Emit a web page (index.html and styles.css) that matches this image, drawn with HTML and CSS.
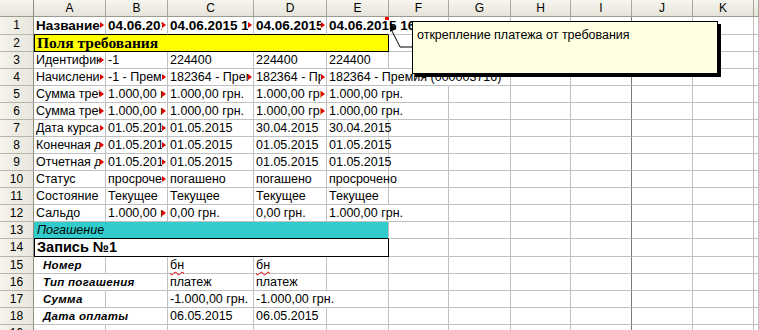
FILE: index.html
```html
<!DOCTYPE html>
<html lang="ru">
<head>
<meta charset="utf-8">
<title>Calc</title>
<link rel="stylesheet" href="styles.css">
</head>
<body>
<div class="sheet">
  <div class="row hdr-row">
    <div class="hd corner"></div>
    <div class="hd">A</div><div class="hd">B</div><div class="hd">C</div><div class="hd">D</div><div class="hd">E</div><div class="hd">F</div><div class="hd">G</div><div class="hd">H</div><div class="hd">I</div><div class="hd">J</div><div class="hd">K</div><div class="hd"></div>
  </div>

  <div class="row tall r1">
    <div class="rh">1</div>
    <div class="c cut bb">Название поля</div>
    <div class="c cut bb">04.06.2015 16:00</div>
    <div class="c cut bb">04.06.2015 16:00</div>
    <div class="c cut bb">04.06.2015 16:00</div>
    <div class="c nob bb note">04.06.2015 16:00</div>
    <div class="c"></div><div class="c"></div><div class="c"></div><div class="c pb"></div><div class="c"></div><div class="c"></div><div class="c"></div>
  </div>

  <div class="row">
    <div class="rh">2</div>
    <div class="c span5 yel">Поля требования</div>
    <div class="c"></div><div class="c"></div><div class="c"></div><div class="c pb"></div><div class="c"></div><div class="c"></div><div class="c"></div>
  </div>

  <div class="row">
    <div class="rh">3</div>
    <div class="c cut">Идентификатор</div>
    <div class="c">-1</div>
    <div class="c">224400</div>
    <div class="c">224400</div>
    <div class="c">224400</div>
    <div class="c"></div><div class="c"></div><div class="c"></div><div class="c pb"></div><div class="c"></div><div class="c"></div><div class="c"></div>
  </div>

  <div class="row">
    <div class="rh">4</div>
    <div class="c cut">Начисление</div>
    <div class="c cut">-1 - Премия</div>
    <div class="c cut">182364 - Премия (000003716)</div>
    <div class="c cut">182364 - Премия (000003716)</div>
    <div class="c nob">182364 - Премия (000003716)</div>
    <div class="c nob"></div><div class="c"></div><div class="c"></div><div class="c pb"></div><div class="c"></div><div class="c"></div><div class="c"></div>
  </div>

  <div class="row">
    <div class="rh">5</div>
    <div class="c cut">Сумма требования</div>
    <div class="c cut">1.000,00 грн.</div>
    <div class="c">1.000,00 грн.</div>
    <div class="c cut">1.000,00 грн.</div>
    <div class="c nob">1.000,00 грн.</div>
    <div class="c"></div><div class="c"></div><div class="c"></div><div class="c pb"></div><div class="c"></div><div class="c"></div><div class="c"></div>
  </div>

  <div class="row">
    <div class="rh">6</div>
    <div class="c cut">Сумма требования</div>
    <div class="c cut">1.000,00 грн.</div>
    <div class="c">1.000,00 грн.</div>
    <div class="c cut">1.000,00 грн.</div>
    <div class="c nob">1.000,00 грн.</div>
    <div class="c"></div><div class="c"></div><div class="c"></div><div class="c pb"></div><div class="c"></div><div class="c"></div><div class="c"></div>
  </div>

  <div class="row">
    <div class="rh">7</div>
    <div class="c cut">Дата курса валюты</div>
    <div class="c cut">01.05.2015</div>
    <div class="c">01.05.2015</div>
    <div class="c">30.04.2015</div>
    <div class="c">30.04.2015</div>
    <div class="c"></div><div class="c"></div><div class="c"></div><div class="c pb"></div><div class="c"></div><div class="c"></div><div class="c"></div>
  </div>

  <div class="row">
    <div class="rh">8</div>
    <div class="c cut">Конечная дата</div>
    <div class="c cut">01.05.2015</div>
    <div class="c">01.05.2015</div>
    <div class="c">01.05.2015</div>
    <div class="c">01.05.2015</div>
    <div class="c"></div><div class="c"></div><div class="c"></div><div class="c pb"></div><div class="c"></div><div class="c"></div><div class="c"></div>
  </div>

  <div class="row">
    <div class="rh">9</div>
    <div class="c cut">Отчетная дата</div>
    <div class="c cut">01.05.2015</div>
    <div class="c">01.05.2015</div>
    <div class="c">01.05.2015</div>
    <div class="c">01.05.2015</div>
    <div class="c"></div><div class="c"></div><div class="c"></div><div class="c pb"></div><div class="c"></div><div class="c"></div><div class="c"></div>
  </div>

  <div class="row">
    <div class="rh">10</div>
    <div class="c">Статус</div>
    <div class="c cut">просрочено</div>
    <div class="c">погашено</div>
    <div class="c">погашено</div>
    <div class="c">просрочено</div>
    <div class="c"></div><div class="c"></div><div class="c"></div><div class="c pb"></div><div class="c"></div><div class="c"></div><div class="c"></div>
  </div>

  <div class="row">
    <div class="rh">11</div>
    <div class="c">Состояние</div>
    <div class="c">Текущее</div>
    <div class="c">Текущее</div>
    <div class="c">Текущее</div>
    <div class="c">Текущее</div>
    <div class="c"></div><div class="c"></div><div class="c"></div><div class="c pb"></div><div class="c"></div><div class="c"></div><div class="c"></div>
  </div>

  <div class="row">
    <div class="rh">12</div>
    <div class="c">Сальдо</div>
    <div class="c cut">1.000,00 грн.</div>
    <div class="c">0,00 грн.</div>
    <div class="c">0,00 грн.</div>
    <div class="c nob">1.000,00 грн.</div>
    <div class="c"></div><div class="c"></div><div class="c"></div><div class="c pb"></div><div class="c"></div><div class="c"></div><div class="c"></div>
  </div>

  <div class="row">
    <div class="rh">13</div>
    <div class="c span5 teal">Погашение</div>
    <div class="c"></div><div class="c"></div><div class="c"></div><div class="c pb"></div><div class="c"></div><div class="c"></div><div class="c"></div>
  </div>

  <div class="row tall">
    <div class="rh">14</div>
    <div class="c span5 rec">Запись №1</div>
    <div class="c"></div><div class="c"></div><div class="c"></div><div class="c pb"></div><div class="c"></div><div class="c"></div><div class="c"></div>
  </div>

  <div class="row">
    <div class="rh">15</div>
    <div class="c lbl">Номер</div>
    <div class="c"></div>
    <div class="c"><span class="spell">бн</span></div>
    <div class="c"><span class="spell">бн</span></div>
    <div class="c"></div>
    <div class="c"></div><div class="c"></div><div class="c"></div><div class="c pb"></div><div class="c"></div><div class="c"></div><div class="c"></div>
  </div>

  <div class="row">
    <div class="rh">16</div>
    <div class="c lbl nob">Тип погашения</div>
    <div class="c"></div>
    <div class="c">платеж</div>
    <div class="c">платеж</div>
    <div class="c"></div>
    <div class="c"></div><div class="c"></div><div class="c"></div><div class="c pb"></div><div class="c"></div><div class="c"></div><div class="c"></div>
  </div>

  <div class="row">
    <div class="rh">17</div>
    <div class="c lbl">Сумма</div>
    <div class="c"></div>
    <div class="c">-1.000,00 грн.</div>
    <div class="c nob">-1.000,00 грн.</div>
    <div class="c"></div>
    <div class="c"></div><div class="c"></div><div class="c"></div><div class="c pb"></div><div class="c"></div><div class="c"></div><div class="c"></div>
  </div>

  <div class="row">
    <div class="rh">18</div>
    <div class="c lbl nob">Дата оплаты</div>
    <div class="c"></div>
    <div class="c">06.05.2015</div>
    <div class="c">06.05.2015</div>
    <div class="c"></div>
    <div class="c"></div><div class="c"></div><div class="c"></div><div class="c pb"></div><div class="c"></div><div class="c"></div><div class="c"></div>
  </div>

  <div class="row">
    <div class="rh">19</div>
    <div class="c"></div><div class="c"></div><div class="c"></div><div class="c"></div><div class="c"></div>
    <div class="c"></div><div class="c"></div><div class="c"></div><div class="c pb"></div><div class="c"></div><div class="c"></div><div class="c"></div>
  </div>

  <svg class="connector" width="40" height="45" viewBox="0 0 40 45">
    <polyline points="12,16 20,32 32,32" fill="none" stroke="#000" stroke-width="1"/>
    <polygon points="10,7 16.6,14.1 10.1,16.7" fill="#000"/>
  </svg>
  <div class="comment">открепление платежа от требования</div>
</div>
</body>
</html>
```

FILE: styles.css
```css
* {
  box-sizing: border-box;
}

body {
  margin: 0;
  background: #ffffff;
  font-family: "Liberation Sans", Arial, sans-serif;
  font-size: 12.5px;
  color: #000;
  overflow: hidden;
}

.sheet {
  position: relative;
  width: 759px;
  height: 330px;
  overflow: hidden;
}

.row {
  display: grid;
  grid-template-columns: 34px 72px 62px 86px 73px 62px 60px 62px 60px 61px 61px 61px 5px;
  height: 17px;
}

.row.tall {
  height: 18px;
}

.hd {
  background: linear-gradient(#f6f5ef, #e6e4d9);
  border-right: 1px solid #a8a79c;
  border-bottom: 1px solid #9c9b90;
  text-align: center;
  font-size: 12px;
  line-height: 16px;
  color: #000;
}

.hd.corner {
  border-right-color: #8e8d83;
}

.rh {
  background: linear-gradient(90deg, #f4f3ec, #e8e6dc);
  border-right: 1px solid #8e8d83;
  border-bottom: 1px solid #b6b5aa;
  text-align: center;
  font-size: 12px;
  line-height: 16px;
}

.row.tall .rh {
  line-height: 17px;
}

.c {
  position: relative;
  min-width: 0;
  border-right: 1px solid #c0c0c0;
  border-bottom: 1px solid #c0c0c0;
  padding-left: 2px;
  white-space: nowrap;
  line-height: 16px;
}

.row.tall .c {
  line-height: 17px;
}

.cut {
  overflow: hidden;
}

.cut::before {
  content: "";
  position: absolute;
  right: 0;
  top: 0;
  bottom: 0;
  width: 5px;
  background: #ffffff;
}

.cut::after {
  content: "";
  position: absolute;
  right: 1px;
  top: 5px;
  width: 0;
  height: 0;
  border-left: 4px solid #e00000;
  border-top: 3px solid transparent;
  border-bottom: 3px solid transparent;
}

.nob {
  border-right-color: transparent;
}

.pb {
  border-right-color: #7a7a7a;
}

.bb {
  border-bottom-color: #000;
}

.r1 .c {
  font-weight: bold;
  font-size: 13.5px;
}

.note::before {
  content: "";
  position: absolute;
  top: 0;
  right: -1px;
  width: 4px;
  height: 3px;
  background: #ff0000;
}

.span5 {
  grid-column: span 5;
}

.yel {
  background: #ffff00;
  border-left: 1px solid #000;
  border-right: 1px solid #000;
  border-bottom: 1px solid #000;
  font-family: "Liberation Serif", "Times New Roman", serif;
  font-weight: bold;
  font-size: 15.5px;
  padding-left: 2px;
}

.teal {
  background: #33cccc;
  border-bottom-color: #000;
  font-style: italic;
  padding-left: 3px;
}

.rec {
  border-left: 1px solid #000;
  border-right: 1px solid #000;
  border-bottom: 1px solid #000;
  font-weight: bold;
  font-size: 14.5px;
  padding-left: 2px;
}

.lbl {
  font-weight: bold;
  font-style: italic;
  font-size: 11.5px;
  padding-left: 9px;
  letter-spacing: 0.3px;
}

.spell {
  text-decoration: underline wavy #e00000;
  text-decoration-thickness: 1px;
  text-underline-offset: 2px;
}

.connector {
  position: absolute;
  left: 380px;
  top: 15px;
}

.comment {
  position: absolute;
  left: 412px;
  top: 21px;
  width: 306px;
  height: 53px;
  background: #ffffe1;
  border: 1px solid #000;
  box-shadow: 3px 3px 0 #000;
  padding: 6px 0 0 4px;
  font-size: 12.5px;
  line-height: 15px;
  white-space: nowrap;
}
```
